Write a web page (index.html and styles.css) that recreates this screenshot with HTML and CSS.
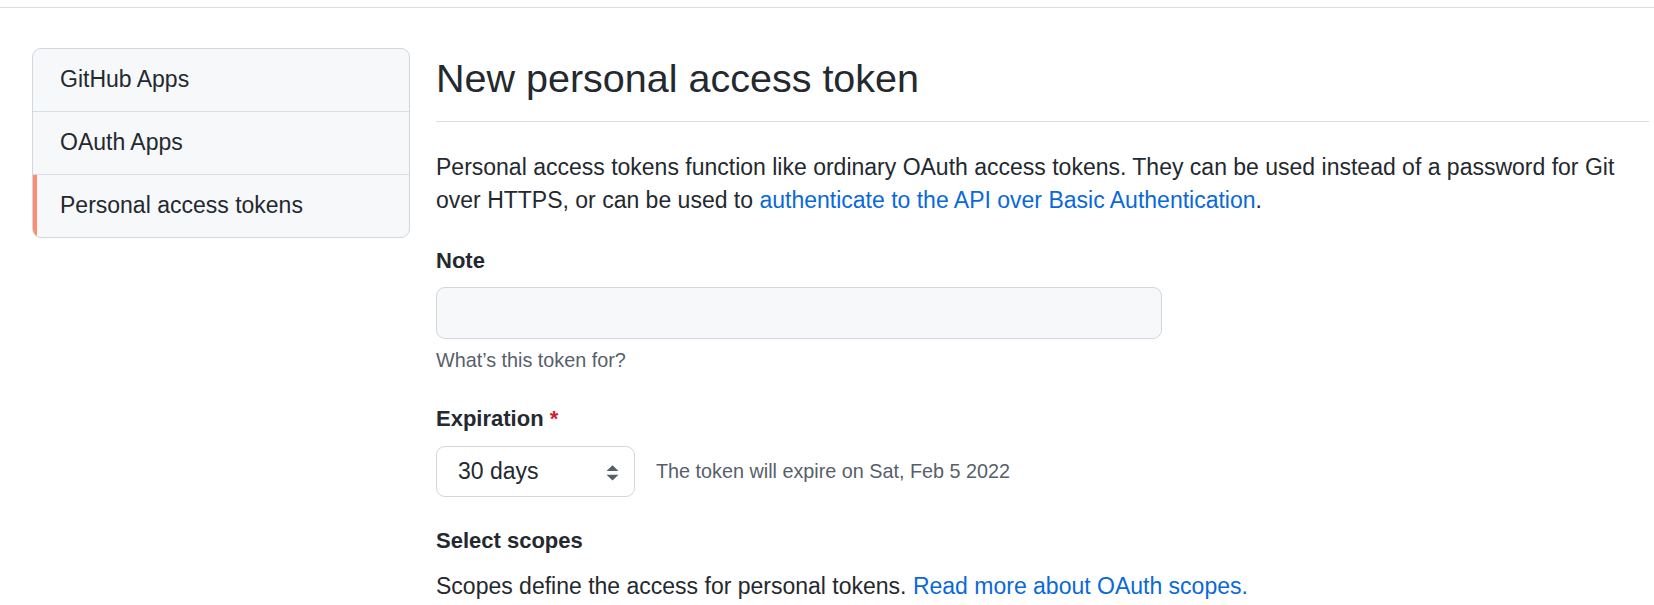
FILE: index.html
```html
<!DOCTYPE html>
<html lang="en">
<head>
<meta charset="utf-8">
<title>New personal access token</title>
<link rel="stylesheet" href="styles.css">
</head>
<body>
<header class="topbar"></header>
<div class="layout">
  <nav class="menu">
    <a class="menu-item" href="#">GitHub Apps</a>
    <a class="menu-item" href="#">OAuth Apps</a>
    <a class="menu-item selected" href="#">Personal access tokens</a>
  </nav>
  <main class="content">
    <h1 class="subhead">New personal access token</h1>
    <p class="intro">Personal access tokens function like ordinary OAuth access tokens. They can be used instead of a password for Git over HTTPS, or can be used to <a class="link" href="#">authenticate to the API over Basic Authentication</a>.</p>

    <label class="label label-note">Note</label>
    <div class="text-input"></div>
    <p class="hint">What’s this token for?</p>

    <label class="label label-exp">Expiration <span class="required">*</span></label>
    <div class="select-row">
      <div class="select">
        <span>30 days</span>
        <svg class="select-arrows" width="13" height="16" viewBox="0 0 13 16" aria-hidden="true">
          <polygon points="0.5,6 6.5,0.3 12.5,6" fill="#57606a"/>
          <polygon points="0.5,9.8 12.5,9.8 6.5,15.5" fill="#57606a"/>
        </svg>
      </div>
      <span class="expire-note">The token will expire on Sat, Feb 5 2022</span>
    </div>

    <h3 class="label label-scopes">Select scopes</h3>
    <p class="scopes-text">Scopes define the access for personal tokens. <a class="link" href="#">Read more about OAuth scopes.</a></p>
  </main>
</div>
</body>
</html>
```

FILE: styles.css
```css
* {
  box-sizing: border-box;
}

html, body {
  margin: 0;
  padding: 0;
  background: #ffffff;
}

body {
  font-family: "Liberation Sans", Arial, sans-serif;
  color: #24292f;
  overflow: hidden;
}

.topbar {
  height: 8px;
  border-bottom: 1px solid #d8dee4;
}

.layout {
  display: flex;
  align-items: flex-start;
  gap: 26px;
  padding: 40px 5px 0 32px;
}

.menu {
  flex: none;
  width: 378px;
  display: flex;
  flex-direction: column;
  background: #f6f8fa;
  border: 1px solid #d0d7de;
  border-radius: 9px;
  overflow: hidden;
}

.menu-item {
  display: block;
  padding: 14px 0 15px 27px;
  font-size: 23px;
  line-height: 33px;
  color: #24292f;
  text-decoration: none;
  border-bottom: 1px solid #d8dee4;
}

.menu-item:last-child {
  border-bottom: 0;
}

.menu-item.selected {
  box-shadow: inset 4px 0 0 #fd8c73;
}

.content {
  flex: 1;
  min-width: 0;
  display: flex;
  flex-direction: column;
  align-items: flex-start;
}

.subhead {
  align-self: stretch;
  margin: 0;
  padding: 5px 0 18px;
  font-size: 39.5px;
  line-height: 50px;
  font-weight: 400;
  border-bottom: 1px solid #d8dee4;
}

.intro {
  margin: 29px 0 0;
  font-size: 23px;
  line-height: 33px;
}

.link {
  color: #0969da;
  text-decoration: none;
}

.label {
  display: block;
  margin: 0;
  font-size: 22px;
  line-height: 33px;
  font-weight: 700;
}

.label-note {
  margin-top: 27px;
}

.label-exp {
  margin-top: 28px;
}

.label-scopes {
  margin-top: 27px;
}

.required {
  color: #cf222e;
}

.text-input {
  margin-top: 10px;
  width: 726px;
  height: 52px;
  background: #f6f8fa;
  border: 1px solid #d0d7de;
  border-radius: 9px;
}

.hint {
  margin: 7px 0 0;
  font-size: 19.8px;
  line-height: 28px;
  color: #57606a;
}

.select-row {
  margin-top: 11px;
  display: flex;
  align-items: center;
  gap: 21px;
}

.select {
  width: 199px;
  height: 51px;
  display: flex;
  align-items: center;
  justify-content: space-between;
  padding: 0 15px 0 21px;
  background: #ffffff;
  border: 1px solid #d0d7de;
  border-radius: 9px;
  font-size: 23px;
  color: #24292f;
}

.select-arrows {
  display: block;
  margin-top: 2px;
}

.expire-note {
  font-size: 19.8px;
  color: #57606a;
}

.scopes-text {
  margin: 13px 0 0;
  font-size: 23px;
  line-height: 33px;
}
```
